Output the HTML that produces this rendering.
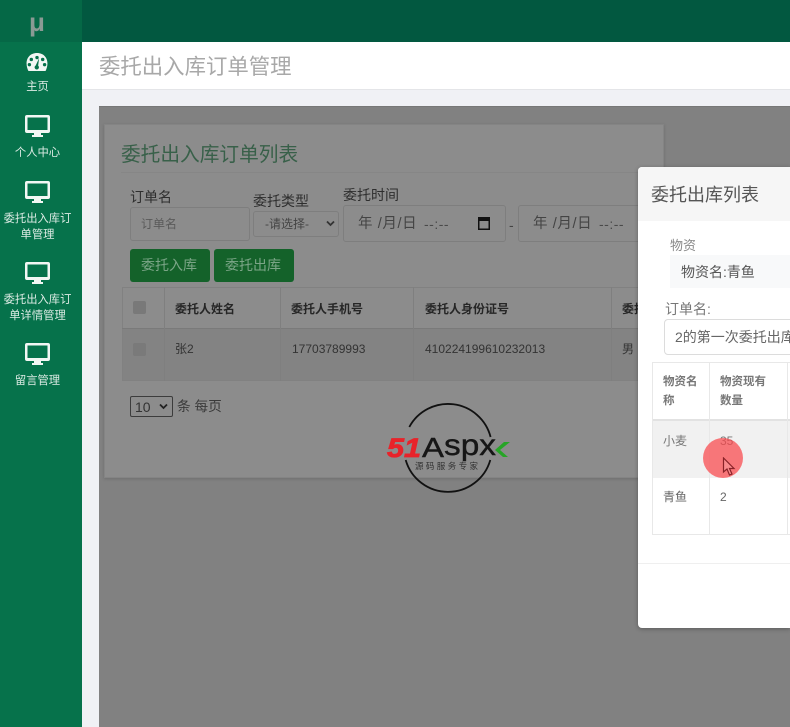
<!DOCTYPE html>
<html lang="zh"><head><meta charset="utf-8"><title>委托出入库订单管理</title>
<style>
*{box-sizing:border-box}
html,body{margin:0;padding:0;width:790px;height:727px;overflow:hidden;background:#f0f1f5;font-family:"Liberation Sans","Noto Sans CJK SC",sans-serif}
#w{position:absolute;left:0;top:0;width:790px;height:727px;overflow:hidden;filter:blur(.35px)}
.a,.t{position:absolute}
.t{white-space:nowrap;line-height:1}
.nav{color:#dcebe4;font-size:11.3px;width:75px;text-align:center;left:0;line-height:15.5px;white-space:normal;position:absolute}
.ic{position:absolute;left:25px}
.b{position:absolute;border:1px solid #7e7e7e}
.v{position:absolute;background:#7f7f7f;width:1px}
.h{position:absolute;background:#7f7f7f;height:1px}
.mv{position:absolute;background:#e8e8e8;width:1px}
.mh{position:absolute;background:#e8e8e8;height:1px}
</style></head><body><div id="w">
<!-- top -->
<div class="a" style="left:82px;top:0;width:708px;height:42px;background:#025840"></div>
<div class="a" style="left:0;top:0;width:82px;height:727px;background:#06724b"></div>
<div class="a" style="left:0;top:0;width:82px;height:42px;background:#056846"></div>
<div class="t" style="left:29px;top:7px;font-size:26px;font-weight:bold;color:#8a9a94;line-height:30px">μ</div>
<!-- nav -->
<svg class="ic" style="top:53px" width="24" height="19" viewBox="0 0 24 20"><path fill="#f2f7f4" fill-rule="evenodd" d="M12 0C5 0 1 5 1 11c0 3 1 6 2 8h18c1-2 2-5 2-8C23 5 19 0 12 0zM12 3a1.800 1.800 0 1 1 0 3.600A1.800 1.800 0 0 1 12 3zM6 5a1.800 1.800 0 1 1 0 3.600A1.800 1.800 0 0 1 6 5zM18 5a1.800 1.800 0 1 1 0 3.600A1.800 1.800 0 0 1 18 5zM4 10.500a1.800 1.800 0 1 1 0 3.600 1.800 1.800 0 0 1 0-3.600zM20 10.500a1.800 1.800 0 1 1 0 3.600 1.800 1.800 0 0 1 0-3.600zM14.200 5.500l-1 7.800a2.300 2.300 0 1 1-2.600-.2z"/></svg>
<div class="nav" style="top:80px">主页</div>
<svg class="ic" style="top:115px" width="25" height="22" viewBox="0 0 25 22"><path fill="#f2f7f4" fill-rule="evenodd" d="M2 0h21a2 2 0 0 1 2 2v14a2 2 0 0 1-2 2H2a2 2 0 0 1-2-2V2a2 2 0 0 1 2-2zM2.500 2.500v12.500h20V2.500zM9 18h7v2h2v2H7v-2h2z"/></svg>
<div class="nav" style="top:146px">个人中心</div>
<svg class="ic" style="top:181px" width="25" height="22" viewBox="0 0 25 22"><path fill="#f2f7f4" fill-rule="evenodd" d="M2 0h21a2 2 0 0 1 2 2v14a2 2 0 0 1-2 2H2a2 2 0 0 1-2-2V2a2 2 0 0 1 2-2zM2.500 2.500v12.500h20V2.500zM9 18h7v2h2v2H7v-2h2z"/></svg>
<div class="nav" style="top:212px">委托出入库订<br>单管理</div>
<svg class="ic" style="top:262px" width="25" height="22" viewBox="0 0 25 22"><path fill="#f2f7f4" fill-rule="evenodd" d="M2 0h21a2 2 0 0 1 2 2v14a2 2 0 0 1-2 2H2a2 2 0 0 1-2-2V2a2 2 0 0 1 2-2zM2.500 2.500v12.500h20V2.500zM9 18h7v2h2v2H7v-2h2z"/></svg>
<div class="nav" style="top:293px">委托出入库订<br>单详情管理</div>
<svg class="ic" style="top:343px" width="25" height="22" viewBox="0 0 25 22"><path fill="#f2f7f4" fill-rule="evenodd" d="M2 0h21a2 2 0 0 1 2 2v14a2 2 0 0 1-2 2H2a2 2 0 0 1-2-2V2a2 2 0 0 1 2-2zM2.500 2.500v12.500h20V2.500zM9 18h7v2h2v2H7v-2h2z"/></svg>
<div class="nav" style="top:374px">留言管理</div>
<!-- header -->
<div class="a" style="left:82px;top:42px;width:708px;height:48px;background:#fff;border-bottom:1px solid #e4e5e8"></div>
<div class="t" style="left:99px;top:55px;font-size:21.4px;color:#a8a8a8;line-height:24px">委托出入库订单管理</div>
<!-- dim panel -->
<div class="a" style="left:99px;top:106px;width:691px;height:621px;background:#818181;border-top:1px solid #777"></div>
<div class="a" style="left:104px;top:124px;width:560px;height:354px;background:#8c8c8c;border:1px solid #848484;box-shadow:0 1px 3px rgba(0,0,0,.15)"></div>
<div class="t" style="left:121px;top:144px;font-size:19.7px;color:#386049;line-height:22px">委托出入库订单列表</div>
<div class="h" style="left:121px;top:172px;width:520px;background:#868686"></div>
<!-- form -->
<div class="t" style="left:130px;top:190px;font-size:14px;color:#2e2e2e">订单名</div>
<div class="b" style="left:130px;top:207px;width:120px;height:34px;border-radius:3px"></div>
<div class="t" style="left:141px;top:218px;font-size:12px;color:#5a5a5a">订单名</div>
<div class="t" style="left:253px;top:194px;font-size:14px;color:#2e2e2e">委托类型</div>
<div class="b" style="left:253px;top:211px;width:86px;height:26px;border-radius:3px"></div>
<div class="t" style="left:265px;top:218px;font-size:12px;color:#444">-请选择-</div>
<svg class="a" style="left:326px;top:220px" width="9" height="7" viewBox="0 0 9 7"><path d="M1 1.500l3.500 3.500L8 1.500" fill="none" stroke="#333" stroke-width="1.800"/></svg>
<div class="t" style="left:343px;top:188px;font-size:14px;color:#2e2e2e">委托时间</div>
<div class="b" style="left:343px;top:205px;width:163px;height:37px;border-radius:3px"></div>
<div class="t" style="left:358px;top:217px;font-size:14.5px;color:#444;letter-spacing:.6px">年 /月/日</div>
<div class="t" style="left:424px;top:217px;font-size:14px;color:#4a4a4a;letter-spacing:.5px">--:--</div>
<svg class="a" style="left:477px;top:216px" width="14" height="15" viewBox="0 0 14 15"><path fill="#111" fill-rule="evenodd" d="M1 1h12v13H1zM2.500 5v7.500h9V5z"/></svg>
<div class="t" style="left:509px;top:218px;font-size:14px;color:#444">-</div>
<div class="b" style="left:518px;top:205px;width:130px;height:37px;border-radius:3px"></div>
<div class="t" style="left:533px;top:217px;font-size:14.5px;color:#444;letter-spacing:.6px">年 /月/日</div>
<div class="t" style="left:599px;top:217px;font-size:14px;color:#4a4a4a;letter-spacing:.5px">--:--</div>
<!-- buttons -->
<div class="a" style="left:130px;top:249px;width:80px;height:33px;background:#14622a;border-radius:3px"></div>
<div class="t" style="left:141px;top:258px;font-size:14px;color:#7ba587">委托入库</div>
<div class="a" style="left:214px;top:249px;width:80px;height:33px;background:#14622a;border-radius:3px"></div>
<div class="t" style="left:225px;top:258px;font-size:14px;color:#7ba587">委托出库</div>
<!-- table -->
<div class="a" style="left:122px;top:287px;width:518px;height:94px;border:1px solid #818181"></div>
<div class="a" style="left:123px;top:329px;width:515px;height:51px;background:#838383"></div>
<div class="h" style="left:122px;top:328px;width:518px;background:#7a7a7a"></div>
<div class="v" style="left:164px;top:287px;height:94px"></div>
<div class="v" style="left:280px;top:287px;height:94px"></div>
<div class="v" style="left:413px;top:287px;height:94px"></div>
<div class="v" style="left:611px;top:287px;height:94px"></div>
<div class="a" style="left:133px;top:301px;width:13px;height:13px;background:#797979;border-radius:2px"></div>
<div class="a" style="left:133px;top:343px;width:13px;height:13px;background:#7a7a7a;border-radius:2px"></div>
<div class="t" style="left:175px;top:303px;font-size:12px;font-weight:bold;color:#262626">委托人姓名</div>
<div class="t" style="left:291px;top:303px;font-size:12px;font-weight:bold;color:#262626">委托人手机号</div>
<div class="t" style="left:425px;top:303px;font-size:12px;font-weight:bold;color:#262626">委托人身份证号</div>
<div class="t" style="left:622px;top:303px;font-size:12px;font-weight:bold;color:#262626">委托</div>
<div class="t" style="left:175px;top:343px;font-size:12px;color:#333">张2</div>
<div class="t" style="left:292px;top:343px;font-size:12px;color:#333">17703789993</div>
<div class="t" style="left:425px;top:343px;font-size:12px;color:#333">410224199610232013</div>
<div class="t" style="left:622px;top:343px;font-size:12px;color:#333">男</div>
<!-- page size -->
<div class="a" style="left:130px;top:396px;width:43px;height:21px;border:1px solid #3c3c3c;border-radius:2px"></div>
<div class="t" style="left:135px;top:400px;font-size:14px;color:#333">10</div>
<svg class="a" style="left:159px;top:403px" width="9" height="7" viewBox="0 0 9 7"><path d="M1 1.500l3.500 3.500L8 1.500" fill="none" stroke="#222" stroke-width="1.800"/></svg>
<div class="t" style="left:177px;top:400px;font-size:13.7px;color:#3a3a3a">条 每页</div>
<!-- modal -->
<div class="a" style="left:638px;top:167px;width:152px;height:461px;background:#fff;border-radius:4px 0 0 4px;box-shadow:0 1px 4px rgba(0,0,0,.3)"></div>
<div class="a" style="left:638px;top:167px;width:152px;height:54px;background:#f6f6f6;border-radius:4px 0 0 0"></div>
<div class="t" style="left:651px;top:185px;font-size:18px;color:#555;line-height:20px">委托出库列表</div>
<div class="t" style="left:670px;top:239px;font-size:13px;color:#888">物资</div>
<div class="a" style="left:670px;top:255px;width:120px;height:33px;background:#f8f9fa"></div>
<div class="t" style="left:681px;top:265px;font-size:14px;color:#555">物资名:青鱼</div>
<div class="t" style="left:665px;top:302px;font-size:14px;color:#777">订单名:</div>
<div class="a" style="left:664px;top:319px;width:140px;height:36px;border:1px solid #dcdcdc;border-radius:4px"></div>
<div class="t" style="left:675px;top:330px;font-size:14px;color:#666">2的第一次委托出库</div>
<div class="a" style="left:653px;top:420px;width:137px;height:58px;background:#f1f1f1"></div>
<div class="mh" style="left:652px;top:362px;width:138px"></div>
<div class="mh" style="left:652px;top:419px;width:138px;height:2px;background:#e2e2e2"></div>
<div class="mh" style="left:652px;top:534px;width:138px;height:1px"></div>
<div class="mv" style="left:652px;top:362px;height:173px"></div>
<div class="mv" style="left:709px;top:362px;height:173px"></div>
<div class="mv" style="left:787px;top:362px;height:173px"></div>
<div class="t" style="left:663px;top:373px;font-size:11.5px;font-weight:bold;color:#777;line-height:19px;white-space:normal;width:40px">物资名称</div>
<div class="t" style="left:720px;top:373px;font-size:11.5px;font-weight:bold;color:#777;line-height:19px;white-space:normal;width:50px">物资现有数量</div>
<div class="t" style="left:663px;top:435px;font-size:12px;color:#777">小麦</div>
<div class="t" style="left:720px;top:435px;font-size:12px;color:#777">35</div>
<div class="t" style="left:663px;top:491px;font-size:12px;color:#666">青鱼</div>
<div class="t" style="left:720px;top:491px;font-size:12px;color:#666">2</div>
<div class="mh" style="left:638px;top:563px;width:152px;background:#efefef"></div>
<!-- cursor highlight -->
<div class="a" style="left:703px;top:438px;width:40px;height:40px;border-radius:50%;background:rgba(250,70,75,.72)"></div>
<svg class="a" style="left:722px;top:457px" width="14" height="19" viewBox="0 0 14 19"><path d="M1.500 1v14l3.500-3 2.500 6 2.500-1-2.500-5.500h4.500z" fill="#f98a8c" stroke="#8a2228" stroke-width="1.200"/></svg>
<!-- watermark -->
<svg class="a" style="left:385px;top:400px" width="130" height="96" viewBox="0 0 130 96">
<path d="M24.300 27A44 44 0 0 1 105.600 37" fill="none" stroke="#111" stroke-width="1.800"/>
<path d="M20.700 60A44 44 0 0 0 105.300 60" fill="none" stroke="#111" stroke-width="1.800"/>
<text x="2" y="57" font-family="Liberation Sans,sans-serif" font-size="27" font-style="italic" font-weight="bold" fill="#e8232a" stroke="#e8232a" stroke-width=".8" textLength="34" lengthAdjust="spacingAndGlyphs">51</text>
<text x="37" y="57" font-family="Liberation Sans,sans-serif" font-size="28" fill="#161616" stroke="#161616" stroke-width=".4" textLength="22" lengthAdjust="spacingAndGlyphs">A</text>
<text x="59" y="55" font-family="Liberation Sans,sans-serif" font-size="30" fill="#161616" stroke="#161616" stroke-width=".4" textLength="52" lengthAdjust="spacingAndGlyphs">spx</text>
<path d="M125 42L115 50 123 57 118 57 110 50 119 42Z" fill="#27a527"/>
<text x="30" y="69" font-family="Liberation Sans,Noto Sans CJK SC,sans-serif" font-size="8.5" fill="#333" letter-spacing="2.400">源码服务专家</text>
</svg>
</div></body></html>
